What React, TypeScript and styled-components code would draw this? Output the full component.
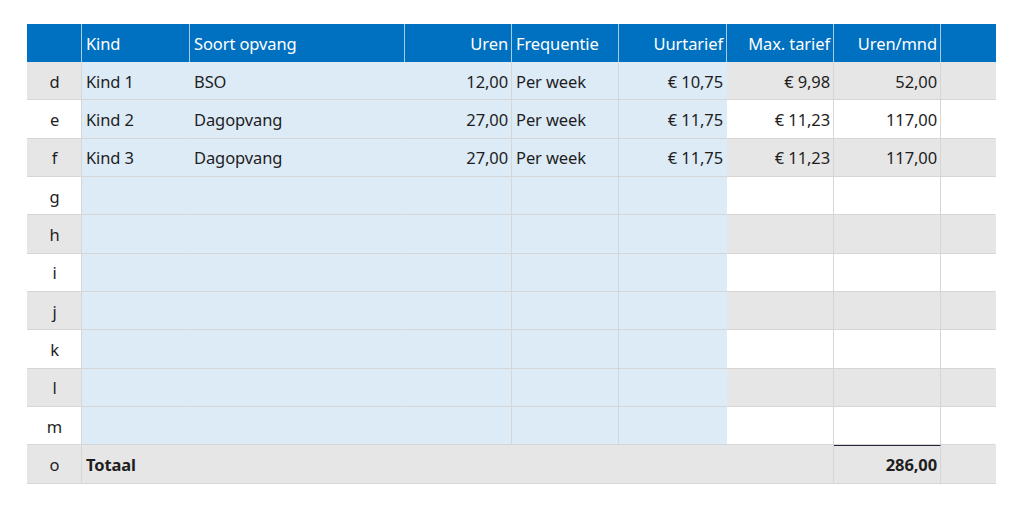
import React from "react";
import styled, { createGlobalStyle, css } from "styled-components";

const GlobalStyle = createGlobalStyle`
  html, body { margin: 0; padding: 0; background: #ffffff; }
  body { font-family: "Noto Sans", "Open Sans", sans-serif; }
`;

const Page = styled.div`
  padding: 24px 0 0 27px;
`;

const Grid = styled.div`
  display: grid;
  grid-template-columns: 55px 108px 215px 107px 107px 108px 107px 107px 55px;
  grid-template-rows: 38px repeat(11, 38.33px);
  width: 969px;
`;

type Tone = "header" | "blue" | "gray" | "white";

const toneBg: Record<Tone, string> = {
  header: "#0070C0",
  blue: "#DDEBF7",
  gray: "#E7E6E6",
  white: "#FFFFFF",
};

const Cell = styled.div<{
  $tone: Tone;
  $align?: "left" | "right" | "center";
  $bold?: boolean;
  $line?: boolean;
  $topRule?: boolean;
  $span?: number;
}>`
  box-sizing: border-box;
  display: flex;
  align-items: center;
  justify-content: ${(p) =>
    p.$align === "right" ? "flex-end" : p.$align === "center" ? "center" : "flex-start"};
  padding: 1px 3px 0 4px;
  font-size: 16.5px;
  letter-spacing: -0.1px;
  white-space: nowrap;
  overflow: hidden;
  background: ${(p) => toneBg[p.$tone]};
  color: ${(p) => (p.$tone === "header" ? "#FFFFFF" : "#1E1E1E")};
  font-weight: ${(p) => (p.$bold ? 700 : 400)};
  ${(p) => p.$span && css`grid-column: span ${p.$span};`}
  ${(p) =>
    p.$tone === "header"
      ? css`
          border-right: 1px solid ${p.$line ? "#A9CBEA" : "transparent"};
        `
      : css`
          border-bottom: 1px solid #D6D6D6;
          border-right: 1px solid ${p.$line ? "#D6D6D6" : "transparent"};
        `}
  ${(p) =>
    p.$topRule &&
    css`
      border-top: 1px solid #25253A;
    `}
`;

type Row = {
  label: string;
  kind?: string;
  soort?: string;
  uren?: string;
  freq?: string;
  uurtarief?: string;
  max?: string;
  mnd?: string;
};

const rows: Row[] = [
  { label: "d", kind: "Kind 1", soort: "BSO", uren: "12,00", freq: "Per week", uurtarief: "€ 10,75", max: "€ 9,98", mnd: "52,00" },
  { label: "e", kind: "Kind 2", soort: "Dagopvang", uren: "27,00", freq: "Per week", uurtarief: "€ 11,75", max: "€ 11,23", mnd: "117,00" },
  { label: "f", kind: "Kind 3", soort: "Dagopvang", uren: "27,00", freq: "Per week", uurtarief: "€ 11,75", max: "€ 11,23", mnd: "117,00" },
  { label: "g" },
  { label: "h" },
  { label: "i" },
  { label: "j" },
  { label: "k" },
  { label: "l" },
  { label: "m" },
];

const headers: { text: string; align: "left" | "right" }[] = [
  { text: "", align: "left" },
  { text: "Kind", align: "left" },
  { text: "Soort opvang", align: "left" },
  { text: "Uren", align: "right" },
  { text: "Frequentie", align: "left" },
  { text: "Uurtarief", align: "right" },
  { text: "Max. tarief", align: "right" },
  { text: "Uren/mnd", align: "right" },
  { text: "", align: "left" },
];

export default function App() {
  return (
    <>
      <GlobalStyle />
      <Page>
        <Grid>
          {headers.map((h, i) => (
            <Cell key={"h" + i} $tone="header" $align={h.align} $line={i < 8}>
              {h.text}
            </Cell>
          ))}
          {rows.map((r, i) => {
            const side: Tone = i % 2 === 0 ? "gray" : "white";
            return (
              <React.Fragment key={r.label}>
                <Cell $tone={side} $align="center" $line>{r.label}</Cell>
                <Cell $tone="blue">{r.kind}</Cell>
                <Cell $tone="blue">{r.soort}</Cell>
                <Cell $tone="blue" $align="right" $line>{r.uren}</Cell>
                <Cell $tone="blue" $line>{r.freq}</Cell>
                <Cell $tone="blue" $align="right">{r.uurtarief}</Cell>
                <Cell $tone={side} $align="right" $line>{r.max}</Cell>
                <Cell $tone={side} $align="right" $line>{r.mnd}</Cell>
                <Cell $tone={side} />
              </React.Fragment>
            );
          })}
          <Cell $tone="gray" $align="center" $line>o</Cell>
          <Cell $tone="gray" $bold $span={6} $line>Totaal</Cell>
          <Cell $tone="gray" $align="right" $bold $line $topRule>286,00</Cell>
          <Cell $tone="gray" />
        </Grid>
      </Page>
    </>
  );
}
